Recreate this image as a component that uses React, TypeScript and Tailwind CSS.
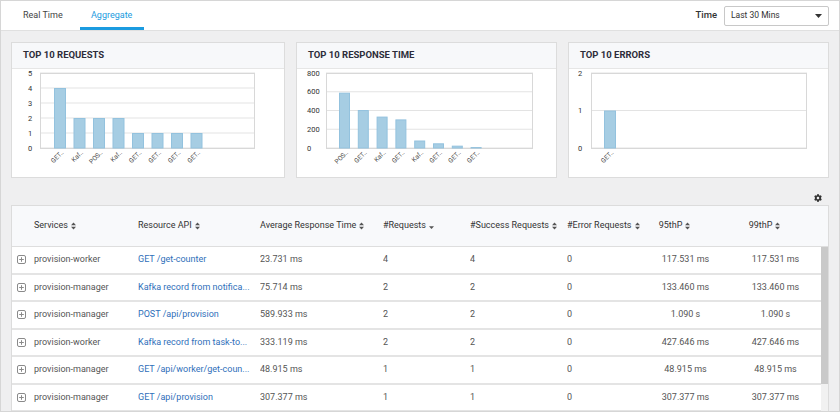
import React from 'react';
import { FaCog } from 'react-icons/fa';

type Bar = { label: string; value: number };

const charts = [
  {
    title: 'TOP 10 REQUESTS',
    width: 'w-[274px]',
    max: 5,
    ticks: [0, 1, 2, 3, 4, 5],
    plot: { left: 28, right: 243 },
    labelX: 16,
    firstBar: 42,
    step: 19.5,
    barW: 12,
    bars: [
      { label: 'GET..', value: 4 },
      { label: 'Kaf..', value: 2 },
      { label: 'POS..', value: 2 },
      { label: 'Kaf..', value: 2 },
      { label: 'GET..', value: 1 },
      { label: 'GET..', value: 1 },
      { label: 'GET..', value: 1 },
      { label: 'GET..', value: 1 },
    ] as Bar[],
  },
  {
    title: 'TOP 10 RESPONSE TIME',
    width: 'w-[261px]',
    max: 800,
    ticks: [0, 200, 400, 600, 800],
    plot: { left: 29, right: 236 },
    labelX: 10,
    firstBar: 42,
    step: 18.8,
    barW: 11,
    bars: [
      { label: 'POS..', value: 590 },
      { label: 'GET..', value: 405 },
      { label: 'Kaf..', value: 335 },
      { label: 'GET..', value: 305 },
      { label: 'Kaf..', value: 80 },
      { label: 'GET..', value: 50 },
      { label: 'GET..', value: 25 },
      { label: 'GET..', value: 10 },
    ] as Bar[],
  },
  {
    title: 'TOP 10 ERRORS',
    width: 'w-[261px]',
    max: 2,
    ticks: [0, 1, 2],
    plot: { left: 22, right: 238 },
    labelX: 9,
    firstBar: 35,
    step: 19.5,
    barW: 12,
    bars: [{ label: 'GET..', value: 1 }] as Bar[],
  },
];

const rows = [
  ['provision-worker', 'GET /get-counter', '23.731 ms', '4', '4', '0', '117.531 ms', '117.531 ms'],
  ['provision-manager', 'Kafka record from notifica...', '75.714 ms', '2', '2', '0', '133.460 ms', '133.460 ms'],
  ['provision-manager', 'POST /api/provision', '589.933 ms', '2', '2', '0', '1.090 s', '1.090 s'],
  ['provision-worker', 'Kafka record from task-to...', '333.119 ms', '2', '2', '0', '427.646 ms', '427.646 ms'],
  ['provision-manager', 'GET /api/worker/get-coun...', '48.915 ms', '1', '1', '0', '48.915 ms', '48.915 ms'],
  ['provision-manager', 'GET /api/provision', '307.377 ms', '1', '1', '0', '307.377 ms', '307.377 ms'],
];

const cols = 'grid grid-cols-[22px_104px_122px_123px_87px_97px_68px_85px_95px]';

const SortIcon = () => (
  <svg width="5" height="8" viewBox="0 0 5 8" className="ml-[3px] inline-block shrink-0">
    <path d="M2.5 0.5 L5 3.3 L0 3.3 Z" fill="#555" />
    <path d="M2.5 7.5 L5 4.7 L0 4.7 Z" fill="#555" />
  </svg>
);

const SortDown = () => (
  <svg width="5" height="8" viewBox="0 0 5 8" className="ml-[3px] inline-block shrink-0">
    <path d="M2.5 7 L5 4.3 L0 4.3 Z" fill="#555" />
  </svg>
);

const ExpandIcon = () => (
  <svg width="9" height="9" viewBox="0 0 9 9">
    <rect x="0.5" y="0.5" width="8" height="8" rx="1.5" fill="none" stroke="#8a8a8a" />
    <path d="M4.5 2.2 V6.8 M2.2 4.5 H6.8" stroke="#8a8a8a" strokeWidth="1" />
  </svg>
);

function Chart({ c }: { c: (typeof charts)[number] }) {
  const top = 4;
  const bottom = 79;
  const h = bottom - top;
  return (
    <svg width="100%" height="108" className="block">
      {c.ticks.map((t) => {
        const y = bottom - (t / c.max) * h;
        return (
          <g key={t}>
            <line x1={c.plot.left} x2={c.plot.right} y1={y} y2={y} stroke="#e3e3e3" strokeWidth="1" />
            <text x={c.labelX} y={y + 2.5} fontSize="7.5" fill="#333">
              {t}
            </text>
          </g>
        );
      })}
      <rect
        x={c.plot.left + 0.5}
        y={top + 0.5}
        width={c.plot.right - c.plot.left - 1}
        height={h}
        fill="none"
        stroke="#d8d8d8"
      />
      {c.bars.map((b, i) => {
        const x = c.firstBar + i * c.step;
        const bh = (b.value / c.max) * h;
        const cx = x + c.barW / 2;
        return (
          <g key={i}>
            <rect x={x + 0.5} y={bottom - bh + 0.5} width={c.barW - 1} height={bh - 0.5} fill="#a6cde3" stroke="#93c2de" />
            <text
              x={cx + 4}
              y={bottom + 5}
              fontSize="6.5"
              fill="#444"
              textAnchor="end"
              transform={`rotate(-45 ${cx + 4} ${bottom + 5})`}
            >
              {b.label}
            </text>
          </g>
        );
      })}
    </svg>
  );
}

export default function App() {
  const headers = ['Services', 'Resource API', 'Average Response Time', '#Requests', '#Success Requests', '#Error Requests', '95thP', '99thP'];
  return (
    <div className="w-[840px] h-[412px] overflow-hidden border border-[#d6d6d6] bg-[#efeff0] font-['Roboto',sans-serif] text-[#555]">
      {/* top bar */}
      <div className="h-[30px] bg-white border-b border-[#e0e0e0] flex items-stretch pl-[22px] pr-[10px]">
        <div className="flex items-center text-[9px] text-[#444] pt-[1px]">Real Time</div>
        <div className="ml-[17px] w-[64px] flex items-center justify-center text-[9px] text-[#1b9be0] border-b-[3px] border-[#1b9be0] pt-[4px]">
          Aggregate
        </div>
        <div className="ml-auto flex items-center">
          <span className="text-[9.5px] font-medium text-[#333] mr-[7px]">Time</span>
          <div className="w-[105px] h-[20px] border border-[#c8c8c8] rounded-[2px] flex items-center justify-between px-[6px] text-[8.5px] text-[#333] bg-white">
            <span>Last 30 Mins</span>
            <svg width="7" height="4" viewBox="0 0 7 4">
              <path d="M0 0 H7 L3.5 4 Z" fill="#333" />
            </svg>
          </div>
        </div>
      </div>

      <div className="pl-[10px] pt-[11px]">
        {/* charts */}
        <div className="flex gap-[11px]">
          {charts.map((c) => (
            <div key={c.title} className={`${c.width} h-[136px] bg-white border border-[#dcdcdc] flex flex-col`}>
              <div className="h-[26px] shrink-0 bg-[#f7f8fa] border-b border-[#e6e6e6] flex items-center px-[11px] text-[9.5px] font-bold text-[#2d2d3a]">
                {c.title}
              </div>
              <div className="h-[108px] shrink-0">
                <Chart c={c} />
              </div>
            </div>
          ))}
        </div>

        {/* settings */}
        <div className="w-[818px] h-[27px] flex justify-end items-start pt-[16px] pr-[7px]">
          <FaCog size={8} color="#333" />
        </div>

        {/* table */}
        <div className="w-[818px] bg-white border border-[#dcdcdc]">
          <div className={`${cols} h-[41px] items-center bg-[#f8f9fb] border-b border-[#dedede] text-[9px] text-[#333]`}>
            <div />
            {headers.map((h, i) => (
              <div key={h} className={`flex items-center whitespace-nowrap ${i >= 6 ? 'justify-center pr-[6px]' : ''}`}>
                {h}
                {h === '#Requests' ? <SortDown /> : <SortIcon />}
              </div>
            ))}
          </div>
          <div className="flex">
            <div className="flex-1">
              {rows.map((r, ri) => (
                <div key={ri} className={`${cols} h-[27.5px] items-center border-b-2 border-[#e4e4e4] text-[9px]`}>
                  <div className="flex items-center pl-[5px]">
                    <ExpandIcon />
                  </div>
                  {r.map((cell, ci) => (
                    <div
                      key={ci}
                      className={`${ci === 1 ? 'text-[#2f6fba]' : 'text-[#555]'} ${ci >= 6 ? 'text-center pl-[16px]' : ''} whitespace-nowrap overflow-hidden`}
                    >
                      {cell}
                    </div>
                  ))}
                </div>
              ))}
            </div>
            <div className="w-[7px] bg-[#f1f1f1] flex flex-col">
              <div className="h-[137px] bg-[#c9c9c9]" />
            </div>
          </div>
        </div>
      </div>
    </div>
  );
}
